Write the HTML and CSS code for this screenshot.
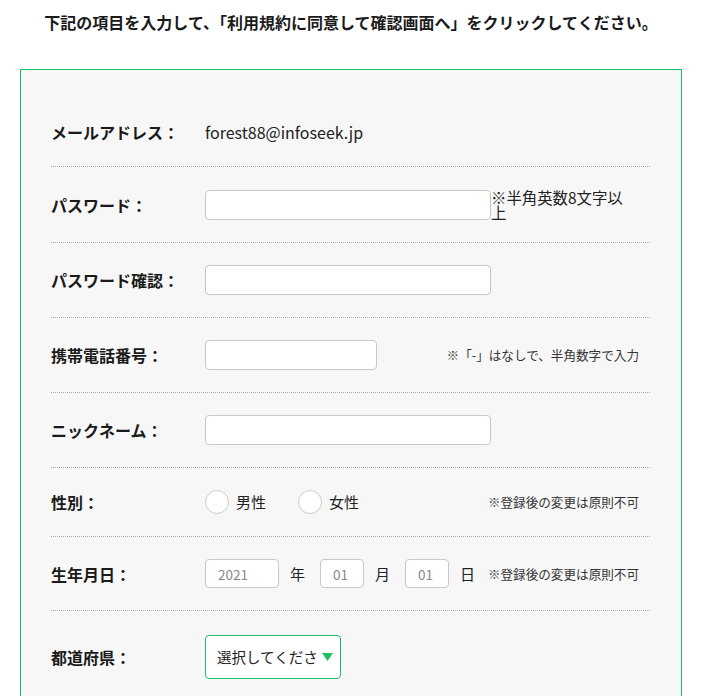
FILE: index.html
```html
<!DOCTYPE html>
<html lang="ja">
<head>
<meta charset="utf-8">
<title>会員登録</title>
<link rel="stylesheet" href="styles.css">
</head>
<body>
<p class="lead">下記の項目を入力して、「利用規約に同意して確認画面へ」をクリックしてください。</p>
<div class="form-box">
  <div class="row">
    <div class="label">メールアドレス：</div>
    <div class="field"><span class="value">forest88@infoseek.jp</span></div>
  </div>
  <div class="row">
    <div class="label">パスワード：</div>
    <div class="field">
      <span class="input input-l"></span>
      <span class="note-inline">※半角英数8文字以上</span>
    </div>
  </div>
  <div class="row">
    <div class="label">パスワード確認：</div>
    <div class="field"><span class="input input-l"></span></div>
  </div>
  <div class="row">
    <div class="label">携帯電話番号：</div>
    <div class="field">
      <span class="input input-m"></span>
      <span class="note">※「-」はなしで、半角数字で入力</span>
    </div>
  </div>
  <div class="row">
    <div class="label">ニックネーム：</div>
    <div class="field"><span class="input input-l"></span></div>
  </div>
  <div class="row">
    <div class="label">性別：</div>
    <div class="field">
      <span class="radio"></span><span class="radio-text">男性</span>
      <span class="radio"></span><span class="radio-text">女性</span>
      <span class="note">※登録後の変更は原則不可</span>
    </div>
  </div>
  <div class="row">
    <div class="label">生年月日：</div>
    <div class="field">
      <span class="input input-year">2021</span><span class="unit">年</span>
      <span class="input input-day">01</span><span class="unit">月</span>
      <span class="input input-day">01</span><span class="unit unit-last">日</span>
      <span class="note">※登録後の変更は原則不可</span>
    </div>
  </div>
  <div class="row row-last">
    <div class="label">都道府県：</div>
    <div class="field">
      <span class="select"><span class="select-text">選択してください</span><svg class="caret" width="11" height="8" viewBox="0 0 11 8"><path d="M0 0H11L5.5 8Z" fill="#1fbf66"/></svg></span>
    </div>
  </div>
</div>
</body>
</html>
```
FILE: styles.css
```css
html, body {
  margin: 0;
  padding: 0;
  background: #fff;
}
body {
  font-family: "Noto Sans CJK JP", "Noto Sans", sans-serif;
  color: #222;
  width: 708px;
}
.lead {
  margin: 0;
  padding: 10px 6px 0 0;
  text-align: center;
  font-size: 16px;
  line-height: 24px;
  font-weight: bold;
  color: #1a1a1a;
  height: 59px;
}
.form-box {
  box-sizing: border-box;
  margin: 0 0 0 20px;
  width: 662px;
  border: 1px solid #1fbf66;
  background: #f7f7f7;
  padding: 28px 31px 20px 30px;
}
.row {
  display: flex;
  align-items: center;
  padding: 22px 0;
  border-bottom: 1px dotted #aaa;
}
.row-last {
  border-bottom: none;
  padding-top: 24px;
}
.label {
  width: 154px;
  flex: none;
  font-size: 16px;
  font-weight: bold;
  line-height: 24px;
  color: #1a1a1a;
}
.field {
  flex: 1;
  display: flex;
  align-items: center;
  min-height: 24px;
}
.value {
  font-size: 16px;
  line-height: 24px;
  color: #222;
}
.input {
  box-sizing: border-box;
  display: flex;
  align-items: center;
  height: 30px;
  background: #fff;
  border: 1px solid #c8c8c8;
  border-radius: 4px;
  padding-left: 12px;
  font-size: 13.5px;
  color: #888;
  flex: none;
}
.input-l { width: 286px; }
.input-m { width: 172px; }
.input-year { width: 74px; height: 29px; }
.input-day { width: 44px; height: 29px; }
.note-inline {
  width: 140px;
  font-size: 15.4px;
  line-height: 15px;
  color: #222;
  align-self: flex-start;
  padding-top: 1px;
}
.note {
  margin-left: auto;
  margin-right: 11px;
  font-size: 12.6px;
  line-height: 20px;
  color: #333;
  white-space: nowrap;
}
.radio {
  box-sizing: border-box;
  width: 24px;
  height: 24px;
  border-radius: 50%;
  border: 1px solid #ccc;
  background: #fff;
  flex: none;
}
.radio-text {
  font-size: 15px;
  line-height: 24px;
  margin-left: 7px;
  margin-right: 32px;
  color: #222;
}
.unit {
  font-size: 15px;
  line-height: 24px;
  margin: 0 15px 0 11px;
  color: #222;
}
.unit-last {
  margin-right: 0;
}
.select {
  box-sizing: border-box;
  display: flex;
  align-items: center;
  width: 136px;
  height: 44px;
  background: #fff;
  border: 1px solid #1fbf66;
  border-radius: 4px;
  padding: 0 0 0 11px;
}
.select-text {
  width: 101.5px;
  overflow: hidden;
  white-space: nowrap;
  font-size: 14.5px;
  color: #222;
  line-height: 20px;
}
.caret {
  display: block;
  flex: none;
  margin-left: 3.5px;
}
```
